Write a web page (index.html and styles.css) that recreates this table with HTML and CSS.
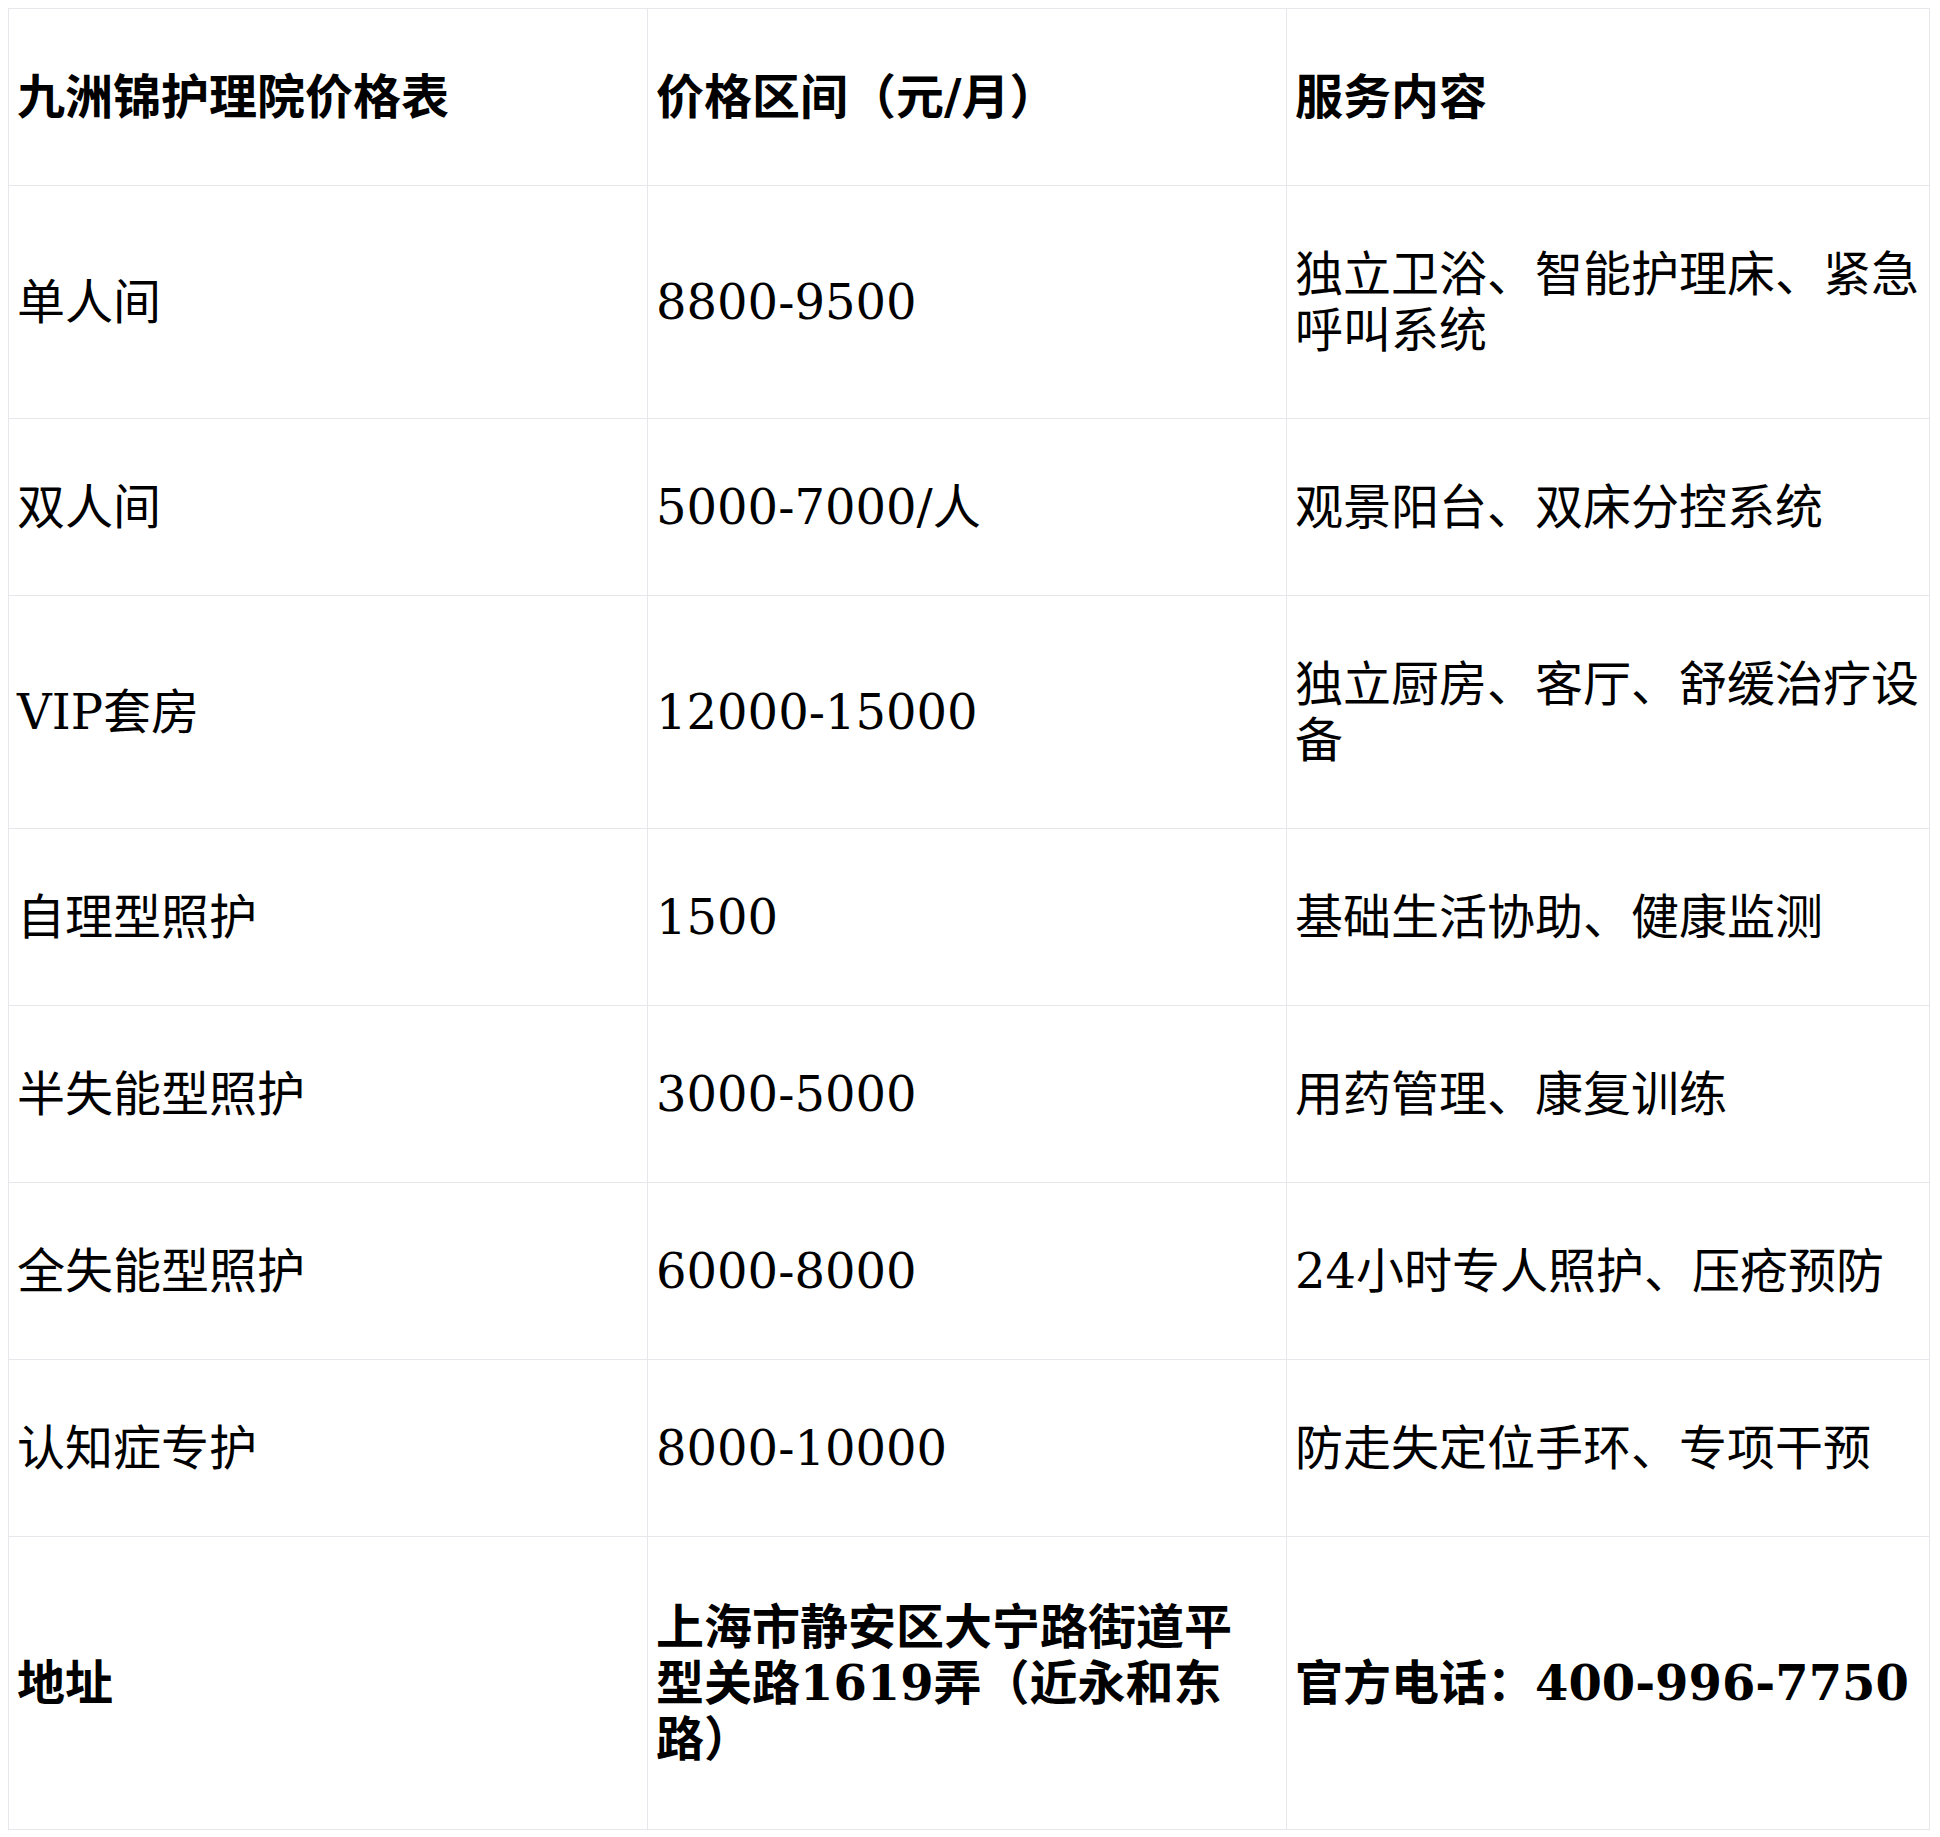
FILE: index.html
```html
<!DOCTYPE html>
<html lang="zh-CN">
<head>
<meta charset="utf-8">
<title>九洲锦护理院价格表</title>
<link rel="stylesheet" href="styles.css">
</head>
<body>
<table class="price-table">
  <colgroup>
    <col class="col-a">
    <col class="col-b">
    <col class="col-c">
  </colgroup>
  <thead>
    <tr>
      <th>九洲锦护理院价格表</th>
      <th>价格区间（元/月）</th>
      <th>服务内容</th>
    </tr>
  </thead>
  <tbody>
    <tr><td>单人间</td><td>8800-9500</td><td>独立卫浴、智能护理床、紧急呼叫系统</td></tr>
    <tr><td>双人间</td><td>5000-7000/人</td><td>观景阳台、双床分控系统</td></tr>
    <tr><td>VIP套房</td><td>12000-15000</td><td>独立厨房、客厅、舒缓治疗设备</td></tr>
    <tr><td>自理型照护</td><td>1500</td><td>基础生活协助、健康监测</td></tr>
    <tr><td>半失能型照护</td><td>3000-5000</td><td>用药管理、康复训练</td></tr>
    <tr><td>全失能型照护</td><td>6000-8000</td><td>24小时专人照护、压疮预防</td></tr>
    <tr><td>认知症专护</td><td>8000-10000</td><td>防走失定位手环、专项干预</td></tr>
    <tr class="row-strong"><td>地址</td><td>上海市静安区大宁路街道平型关路1619弄（近永和东路）</td><td>官方电话：400-996-7750</td></tr>
  </tbody>
</table>
</body>
</html>
```
FILE: styles.css
```css
html, body {
  background: #ffffff;
}
body {
  margin: 8px;
  font-family: "DejaVu Serif", "Noto Sans CJK SC", serif;
  color: #000000;
}
.price-table {
  border-collapse: collapse;
  table-layout: fixed;
  width: 1921px;
  font-size: 48px;
  line-height: 56px;
}
.col-a { width: 639px; }
.col-b { width: 639px; }
.col-c { width: 643px; }
.price-table th,
.price-table td {
  border: 1px solid #e5e7eb;
  padding: 60px 8px;
  text-align: left;
  vertical-align: middle;
}
.price-table th {
  font-weight: bold;
}
.row-strong td {
  font-weight: bold;
  padding-top: 62px;
  padding-bottom: 62px;
}
```
